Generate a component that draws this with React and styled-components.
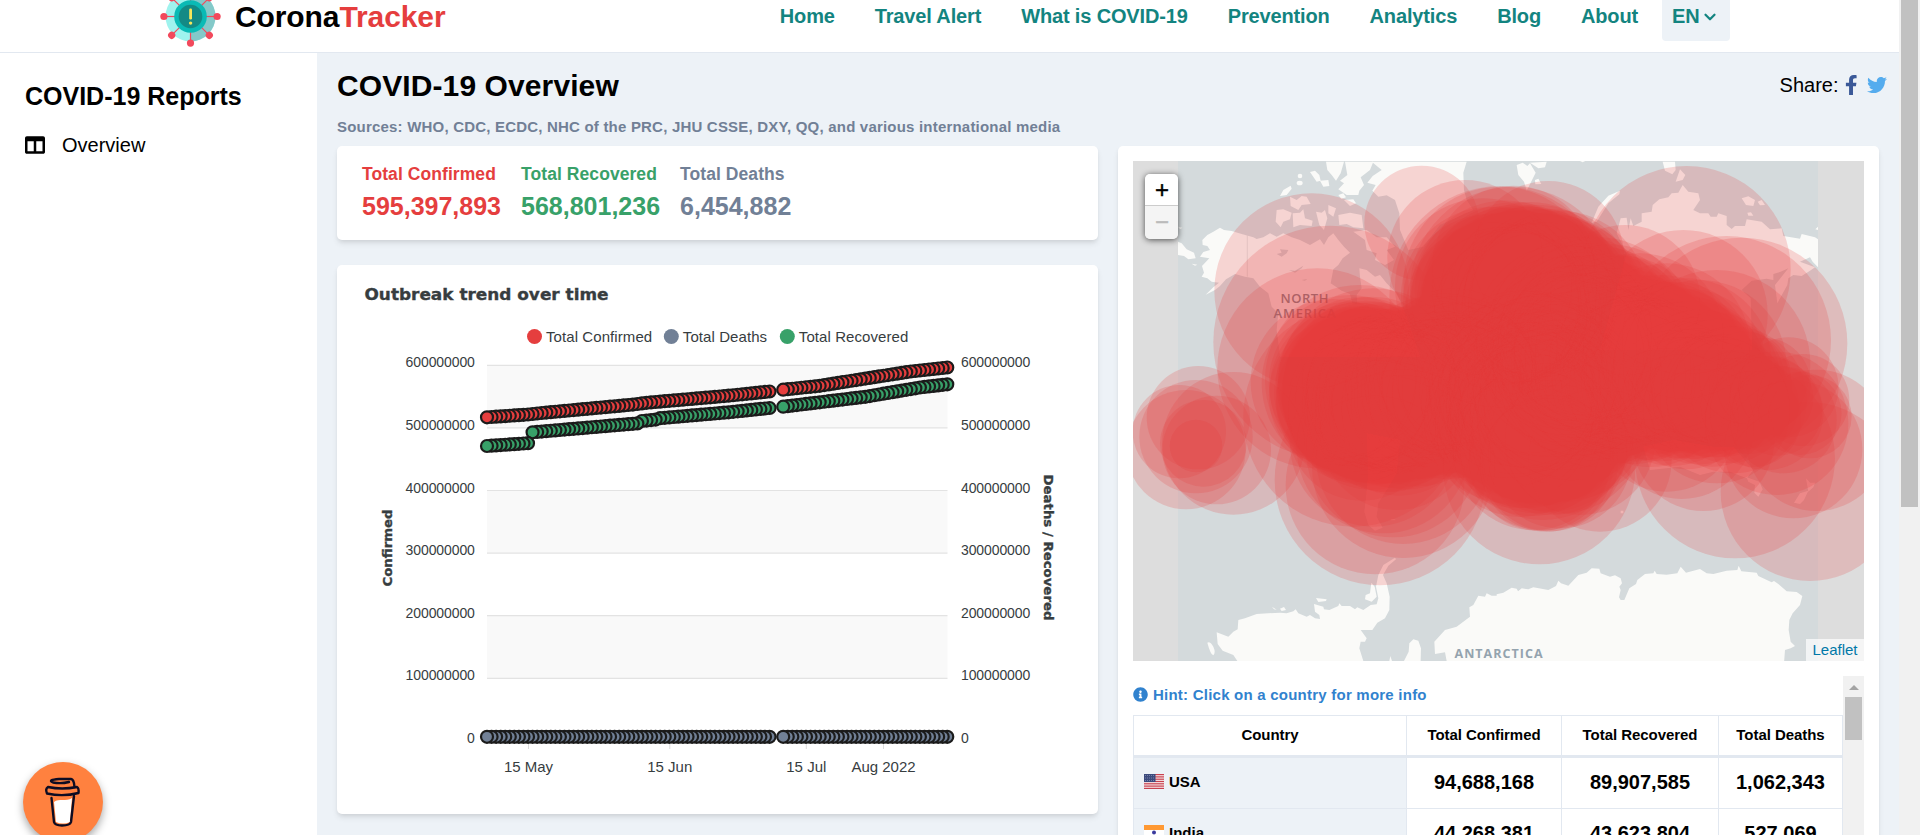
import React from 'react';
import styled, { createGlobalStyle } from 'styled-components';
import { FaColumns, FaFacebookF, FaTwitter, FaInfoCircle } from 'react-icons/fa';
import { FiChevronDown } from 'react-icons/fi';

const RED = '#e53e3e';
const GREEN = '#38a169';
const SLATE = '#718096';
const SANS = '"Liberation Sans", Arial, sans-serif';

const GlobalStyle = createGlobalStyle`
  * { box-sizing: border-box; }
  body { margin: 0; overflow: hidden; background: #fff; color: #000; font-family: ${SANS}; }
`;

const Page = styled.div`
  display: flex;
  width: 1920px;
  height: 835px;
  overflow: hidden;
  position: relative;
`;

const Viewport = styled.div`
  width: 1899px;
  height: 835px;
  display: flex;
  flex-direction: column;
`;

const PageScrollbar = styled.div`
  width: 21px;
  height: 835px;
  background: #f1f1f1;
  padding: 0 2px;
`;

const Thumb = styled.div`
  height: ${(p) => p.$height}px;
  background: #c1c1c1;
`;

/* ---------- header ---------- */

const Header = styled.header`
  flex: none;
  height: 53px;
  padding: 0 169px 19px 160px;
  border-bottom: 1px solid #e2e8f0;
  background: #fff;
  display: flex;
  align-items: center;
  justify-content: space-between;
`;

const Brand = styled.div`
  display: flex;
  align-items: center;
  gap: 14px;
  height: 33px;
  font-size: 30px;
  font-weight: 700;
  line-height: 33px;
  letter-spacing: -0.1px;
  svg { flex: none; }
`;

const BrandAccent = styled.span`
  color: ${RED};
`;

const Nav = styled.nav`
  display: flex;
  align-items: center;
  height: 33px;
  color: #138480;
`;

const NavLink = styled.a`
  padding: 0 20px;
  font-size: 20px;
  font-weight: 700;
  line-height: 32px;
  margin-bottom: 2px;
  letter-spacing: -0.15px;
  white-space: nowrap;
`;

const LangButton = styled.div`
  display: flex;
  align-items: center;
  width: 68px;
  height: 48px;
  margin: 0 0 0 4px;
  padding: 0 0 0 10px;
  border-radius: 4px;
  background: #edf2f7;
  font-size: 20px;
  font-weight: 700;
  span { line-height: 32px; margin: 0 1px 2px 0; }
  svg { margin-top: 1px; }
`;

/* ---------- layout ---------- */

const Body = styled.div`
  flex: 1;
  display: flex;
  min-height: 0;
`;

const Sidebar = styled.aside`
  flex: none;
  width: 317px;
  padding: 28px 25px;
  background: #fff;
`;

const SidebarTitle = styled.h2`
  margin: 0;
  font-size: 25px;
  line-height: 30px;
`;

const SidebarItem = styled.a`
  display: flex;
  align-items: center;
  gap: 17px;
  margin-top: 19px;
  font-size: 20px;
  line-height: 30px;
`;

const Main = styled.main`
  flex: 1;
  background: #edf2f7;
  padding: 15px 20px 0;
  overflow: hidden;
`;

const TitleBar = styled.div`
  display: flex;
  justify-content: space-between;
  align-items: center;
  height: 36px;
  margin-right: -8px;
`;

const Title = styled.h1`
  margin: 0;
  font-size: 30px;
  line-height: 36px;
  letter-spacing: 0.1px;
`;

const Share = styled.div`
  display: flex;
  align-items: center;
  margin-bottom: 2px;
  font-size: 20px;
  line-height: 34px;
  svg { margin-left: 8px; }
  svg:first-of-type { width: 12.5px; margin: 0 2px 0 6px; }
`;

const Sources = styled.p`
  margin: 12px 0 8px;
  font-size: 15px;
  line-height: 22px;
  font-weight: 700;
  letter-spacing: 0.2px;
  color: ${SLATE};
`;

const Columns = styled.div`
  display: grid;
  grid-template-columns: 761px 761px;
  gap: 20px;
`;

const Column = styled.div`
  display: flex;
  flex-direction: column;
  gap: 25px;
`;

const Card = styled.section`
  background: #fff;
  border-radius: 5px;
  box-shadow: 0 4px 6px -1px rgba(0, 0, 0, 0.1), 0 2px 4px -1px rgba(0, 0, 0, 0.06);
`;

const StatsCard = styled(Card)`
  display: flex;
  gap: 20px;
  height: 94px;
  padding: 16px 25px;
`;

const Stat = styled.div`
  color: ${(p) => p.$color};
  font-weight: 700;
`;

const StatLabel = styled.div`
  font-size: 17.5px;
  line-height: 24px;
  letter-spacing: 0.07px;
`;

const StatValue = styled.div`
  margin-top: 2px;
  font-size: 25px;
  line-height: 36px;
`;

const ChartCard = styled(Card)`
  height: 549px;
  svg { display: block; }
`;

const MapCard = styled(Card)`
  height: 720px;
  padding: 15px;
`;

/* ---------- map ---------- */

const MapBox = styled.div`
  position: relative;
  width: 731px;
  height: 500px;
  overflow: hidden;
  background: #ddd;
  svg { display: block; }
`;

const ZoomControl = styled.div`
  position: absolute;
  left: 12px;
  top: 13px;
  width: 33px;
  border-radius: 5px;
  overflow: hidden;
  box-shadow: 0 1px 6px rgba(0, 0, 0, 0.65);
`;

const ZoomButton = styled.div`
  display: flex;
  justify-content: center;
  height: ${(p) => (p.$disabled ? 33 : 32)}px;
  padding-left: 1px;
  border-bottom: ${(p) => (p.$disabled ? 'none' : '1px solid #ccc')};
  background: ${(p) => (p.$disabled ? '#f4f4f4' : '#fff')};
  color: ${(p) => (p.$disabled ? '#bbb' : '#000')};
  font-size: 24px;
  line-height: 31px;
  -webkit-text-stroke: 0.4px currentColor;
`;

const Attribution = styled.div`
  position: absolute;
  right: 0;
  bottom: 0;
  width: 58px;
  height: 22px;
  background: rgba(255, 255, 255, 0.7);
  color: #0078a8;
  font-size: 15px;
  line-height: 22px;
  text-align: center;
`;

/* ---------- table ---------- */

const TableArea = styled.div`
  display: flex;
  margin-top: 15px;
  height: 200px;
  overflow: hidden;
`;

const TableContent = styled.div`
  width: 710px;
`;

const Hint = styled.div`
  display: flex;
  align-items: center;
  gap: 5px;
  height: 39px;
  padding-bottom: 3px;
  color: #3182ce;
  font-size: 15px;
  font-weight: 700;
  letter-spacing: 0.23px;
`;

const Row = styled.div`
  display: grid;
  grid-template-columns: 273px 155px 157px 125px;
  height: ${(p) => (p.$head ? 43 : 51)}px;
  border: 0 solid #e2e8f0;
  border-top-width: ${(p) => (p.$head ? 1 : 0)}px;
  border-bottom-width: ${(p) => (p.$head ? 3 : 1)}px;
`;

const Cell = styled.div`
  display: flex;
  align-items: center;
  justify-content: center;
  padding-bottom: ${(p) => (p.$head ? 2 : 1)}px;
  border-left: 1px solid #e2e8f0;
  font-weight: 700;
  font-size: ${(p) => (p.$head ? 15 : 20)}px;
  letter-spacing: ${(p) => (p.$head ? -0.05 : 0)}px;
  &:last-child { border-right: 1px solid #e2e8f0; }
`;

const CountryCell = styled(Cell)`
  justify-content: flex-start;
  gap: 5px;
  padding: 0 0 3px 10px;
  background: #edf2f7;
  font-size: 15px;
`;

const InnerScrollbar = styled.div`
  width: 21px;
  background: #f1f1f1;
  padding: 0 2px;
`;

const ScrollArrow = styled.div`
  height: 21px;
  display: flex;
  align-items: center;
  justify-content: center;
  &::before {
    content: '';
    border: 5px solid transparent;
    border-top: 0;
    border-bottom: 5px solid #a3a3a3;
    margin-top: 2px;
  }
`;

const CoffeeButton = styled.div`
  position: absolute;
  left: 23px;
  top: 762px;
  width: 80px;
  height: 80px;
  border-radius: 50%;
  background: #ff813f;
  box-shadow: 0 4px 8px rgba(0, 0, 0, 0.35);
`;

/* ---------- drawings ---------- */

function VirusLogo() {
  const spokes = [0, 45, 90, 135, 180, 225, 270, 315];
  return (
    <svg width="61" height="61" viewBox="-30.5 -30.5 61 61">
      <circle r="25" fill="#9ff3ee" />
      <path d="M0,-25 A25,25 0 0 1 0,25 Z" fill="#84c9c9" />
      {spokes.map((a) => (
        <g key={a} transform={`rotate(${a})`}>
          <line x1="14" x2="25" stroke="#f2495c" strokeWidth="1.2" />
          <circle cx="26.6" r="3.6" fill="#f2495c" />
        </g>
      ))}
      <circle r="16.3" fill="#0abab5" />
      <circle r="11.8" fill="#138a85" />
      <rect x="-1.3" y="-8" width="2.8" height="11" rx="1.2" fill="#f6e65a" />
      <circle cx="0.1" cy="6.6" r="1.7" fill="#f6e65a" />
    </svg>
  );
}

function Coffee() {
  return (
    <svg width="80" height="80" viewBox="0 0 80 80">
      <path d="M31,40 C36,36 43,40 49,36 L47,60 Q40,63 33,60 Z" fill="#fff" />
      <g fill="none" stroke="#0d0c23" strokeWidth="2.4" strokeLinecap="round" strokeLinejoin="round">
        <path d="M28.500,36 L31,60 Q32,63.500 39,63.500 Q47,63.500 48,60 L51,34" />
        <path d="M25,25 Q39,28 54,25 Q56,26 55.500,31 Q40,35 24,31.500 Q22,27 25,25 Z" />
        <path d="M46,20 Q38,22 30,20.500 Q24,18 36,17 L48,17 Q51,17.500 51.500,25" />
      </g>
    </svg>
  );
}

const Y_TICKS = [600000000, 500000000, 400000000, 300000000, 200000000, 100000000, 0];
const X_TICKS = [
  ['15 May', 528.5],
  ['15 Jun', 669.8],
  ['15 Jul', 806.3],
  ['Aug 2022', 883.5],
];
const yAt = (i) => 365.3 + i * 62.6;
const DAYS = Array.from({ length: 102 }, (_, i) => i).filter((i) => i !== 63 && i !== 64);
const dayX = (i) => 487 + i * 4.557;

const CONFIRMED = [[0, 417.3], [9, 414.5], [12, 413], [32, 404.6], [35, 402.8], [53, 395.7], [62, 391.5], [65, 389.7], [73, 385.8], [83, 378.6], [93, 371.5], [101, 367.5]];
const RECOVERED = [[0, 446], [9, 443.2], [10, 432.3], [33, 423.4], [34, 421], [37, 419.6], [38, 418.2], [53, 412.3], [62, 408], [65, 406.7], [83, 396.8], [95, 387.5], [101, 384.3]];
const DEATHS = [[0, 736.8], [101, 736.8]];

function interpolate(points, i) {
  const k = Math.max(1, points.findIndex((p) => p[0] >= i));
  const [x0, y0] = points[k - 1];
  const [x1, y1] = points[k];
  return y0 + ((y1 - y0) * (i - x0)) / (x1 - x0);
}

function Series({ points, color }) {
  return (
    <g fill={color} stroke="#1b1b1b" strokeWidth="2.2">
      {[...DAYS].reverse().map((i) => (
        <circle key={i} cx={dayX(i)} cy={interpolate(points, i)} r="6" />
      ))}
    </g>
  );
}

function TrendChart() {
  const wide = {
    fontFamily: '"DejaVu Sans", Verdana, sans-serif',
    fontWeight: 700,
    lengthAdjust: 'spacingAndGlyphs',
    stroke: '#373d3f',
    strokeWidth: 0.35,
  };
  return (
    <svg width="761" height="549" viewBox="337 265 761 549" fontFamily={SANS} fill="#373d3f">
      <text x="364.500" y="300" fontSize="16" textLength="244" {...wide}>Outbreak trend over time</text>
      {[['Total Confirmed', RED, 534.5], ['Total Deaths', SLATE, 671.3], ['Total Recovered', GREEN, 787.3]].map(
        ([label, color, x]) => (
          <g key={label}>
            <circle cx={x} cy="336.500" r="7.500" fill={color} />
            <text x={x + 11.5} y="342" fontSize="15" letterSpacing="0.080">{label}</text>
          </g>
        )
      )}
      {[0, 2, 4].map((i) => (
        <rect key={i} x="487" y={yAt(i)} width="460.500" height="62.600" fill="#f9f9f9" />
      ))}
      {Y_TICKS.map((v, i) => (
        <g key={v}>
          {i < 6 && <line x1="487" x2="947.500" y1={yAt(i)} y2={yAt(i)} stroke="#e3e3e3" strokeWidth="1.2" />}
          <text x="474.800" y={yAt(i) + 2} fontSize="14" letterSpacing="-0.100" textAnchor="end">{v}</text>
          <text x="961" y={yAt(i) + 2} fontSize="14" letterSpacing="-0.100">{v}</text>
        </g>
      ))}
      {X_TICKS.map(([label, x]) => (
        <g key={label}>
          <line x1={x} x2={x} y1="741" y2="749" stroke="#dcdcdc" />
          <text x={x} y="772.300" fontSize="15" textAnchor="middle">{label}</text>
        </g>
      ))}
      <text transform="translate(392 586.500) rotate(-90)" fontSize="13" textLength="77" {...wide}>Confirmed</text>
      <text transform="translate(1044 474.500) rotate(90)" fontSize="13" textLength="146" {...wide}>Deaths / Recovered</text>
      <Series points={CONFIRMED} color={RED} />
      <Series points={DEATHS} color={SLATE} />
      <Series points={RECOVERED} color={GREEN} />
    </svg>
  );
}

/* Case circles as [cx, cy, r], grouped by map quadrant; units are thirds of a pixel. */
const NORTH_WEST = [
  [575, 422, 292], [630, 577, 350], [592, 655, 300], [905, 219, 172], [1035, 323, 233], [1140, 440, 332],
  [1180, 420, 310], [640, 695, 248], [690, 700, 265], [720, 690, 285], [760, 700, 285], [1090, 410, 265],
];
const SOUTH_WEST = [
  [198, 149, 179], [228, 138, 79], [340, 130, 214], [235, 53, 155], [228, 110, 170], [290, 150, 163], [178, 95, 140],
  [250, 130, 130], [780, 240, 316], [765, 255, 268], [850, 200, 274], [850, 170, 262], [820, 150, 262], [760, 130, 250],
  [725, 80, 222], [790, 140, 260], [700, 50, 330], [720, 30, 215], [800, 60, 215], [830, 100, 230],
];
const NORTH_EAST = [
  [560, 360, 312], [725, 580, 317], [680, 571, 313], [550, 493, 253], [375, 450, 225], [650, 641, 281],
  [145, 320, 227], [40, 350, 243], [0, 400, 290], [420, 560, 250], [500, 590, 250], [560, 640, 255], [600, 650, 260],
  [910, 750, 138], [900, 790, 125], [930, 800, 125], [700, 750, 220],
];
const SOUTH_EAST = [
  [118, 205, 288], [120, 180, 213], [150, 190, 204], [180, 170, 215], [100, 150, 240], [130, 140, 250], [140, 195, 200],
  [300, 180, 215], [240, 120, 225], [705, 175, 300], [930, 275, 268], [880, 148, 207], [950, 121, 212],
  [610, 120, 213], [545, 80, 217], [500, 60, 215], [830, 70, 215], [850, 60, 160], [800, 40, 170], [650, 30, 220],
];

/* Overlapping clusters: [cx, cy, spreadX, spreadY, r, count] in pixels. */
const CLUSTERS = [
  [1524, 303, 38, 15, 87, 50],
  [1368, 392, 22, 14, 80, 34],
  [1400, 402, 28, 16, 76, 24],
  [1448, 385, 30, 20, 74, 26],
  [1538, 405, 36, 34, 84, 50],
  [1592, 350, 36, 28, 86, 34],
  [1652, 372, 46, 18, 78, 32],
  [1704, 390, 34, 18, 62, 18],
  [1762, 398, 38, 24, 46, 8],
];

function clusterCircles() {
  const out = [];
  CLUSTERS.forEach(([cx, cy, sx, sy, r, n]) => {
    for (let i = 0; i < n; i += 1) {
      const t = i * 2.39996;
      const d = Math.sqrt((i + 0.5) / n);
      out.push([cx + Math.cos(t) * d * sx, cy + Math.sin(t) * d * sy, r + ((i * 7) % 9) - 4]);
    }
  });
  return out;
}

function Circles({ list }) {
  return list.map(([x, y, r], i) => <circle key={i} cx={x} cy={y} r={r} />);
}

function WorldMap() {
  const q = {
    nw: 'translate(1120 150) scale(0.33333)',
    ne: 'translate(1500 150) scale(0.33333)',
    sw: 'translate(1120 400) scale(0.33333)',
    se: 'translate(1500 400) scale(0.33333)',
  };
  return (
    <svg width="731" height="500" viewBox="1133 161 731 500">
      <rect x="1178" y="161" width="640" height="500" fill="#d4dadc" />
      <g fill="#fafaf8" strokeLinejoin="round">
        <g transform={q.nw}>
          <path d="M174,275 L185,280 200,298 222,308 227,325 205,328 192,318 174,315Z M215,341 L232,344 225,347Z M174,230 L187,233 180,238Z" />
          <path d="M247,270 L262,255 280,245 300,233 312,240 335,243 365,252 400,262 410,267 430,262 450,250 470,260 490,250 515,262 540,270 570,285 600,268 612,285 625,262 640,250 655,270 672,290 690,308 668,325 655,345 640,358 632,400 665,422 690,432 697,460 712,462 710,435 725,415 720,380 718,355 740,360 765,380 780,375 800,400 830,430 860,500 900,620 480,620 470,540 475,490 455,470 445,430 420,410 400,385 375,380 345,372 318,388 300,408 285,420 257,434 280,412 297,398 275,395 262,385 245,380 252,368 246,348 268,325 240,320 250,306 270,300 262,288 248,285Z" />
          <path d="M510,140 L530,150 545,138 560,140 572,162 545,165 535,180 512,168Z M470,180 L490,178 515,188 510,208 490,215 482,232 467,215Z M518,190 L540,188 550,178 555,205 578,212 575,228 540,225 520,232Z M588,185 L605,188 615,180 622,205 612,240 598,225Z M625,165 L648,175 640,200 625,190Z M655,195 L690,188 725,195 730,235 700,232 680,222 658,225Z" />
          <path d="M700,245 L740,240 770,262 800,262 825,290 800,300 822,330 795,345 765,330 770,310 740,300 735,270Z" />
          <path d="M618,35 L672,35 662,70 648,92 635,75 622,60Z M675,35 L760,35 750,60 722,82 732,105 718,122 715,135 680,135 655,118 672,100 660,92 682,75Z M570,66 L585,62 598,75 602,92 590,95Z M600,92 L625,90 628,108 610,110Z M533,78 a7,7 0 1 0 14,0 a7,7 0 1 0 -14,0 M530,99 a9,7 0 1 0 18,0 a9,7 0 1 0 -18,0 M480,138 L490,120 512,107 515,116 500,135Z M672,150 L700,148 708,160 690,168Z M655,135 l15,-5 8,12 -14,5Z" />
          <path d="M755,35 L1040,35 1030,68 1032,120 1040,150 1060,180 960,225 910,290 865,300 840,240 838,190 825,150 800,136 775,140 757,122 767,105 742,98 758,78 785,60Z" />
        </g>
        <g transform={q.ne}>
          <path d="M50,45 L68,38 82,48 90,40 107,68 92,98 80,122 72,95 55,75Z M90,38 L140,35 135,52 115,55Z M105,90 L115,86 124,102 106,103Z M240,33 L256,33 248,37Z" />
          <path d="M360,122 L325,137 295,170 275,218 290,215 325,160 358,133Z M488,35 L525,35 527,60 517,73 495,62Z M540,58 L556,75 548,90 527,95Z" />
          <path d="M380,310 L350,250 362,205 380,203 385,240 392,205 400,228 425,215 425,190 455,185 458,165 478,148 505,142 515,130 535,128 548,105 565,125 595,130 600,150 580,180 600,190 625,190 632,200 650,200 655,190 680,198 680,225 695,237 705,228 735,228 740,208 785,215 810,238 845,235 850,258 900,266 905,252 945,262 954,268 954,352 938,335 930,322 900,335 945,352 930,362 905,378 880,375 865,385 862,405 832,460 825,405 865,355 842,365 820,372 820,390 800,386 755,392 725,420 752,445 757,600 300,600Z" />
          <path d="M725,145 L745,139 765,150 760,168 738,165Z M773,155 L785,150 795,165 780,166Z M742,188 L753,187 760,197 745,197Z M946,238 L954,230 954,240Z" />
        </g>
        <g transform={q.sw}>
          <path d="M352,783 L340,765 308,752 293,732 290,697 325,710 340,695 353,688 355,660 375,655 410,642 480,638 500,640 520,634 527,628 535,640 560,650 570,645 585,655 600,657 598,645 585,635 582,612 610,620 612,628 628,630 655,618 658,610 665,618 690,618 705,628 712,622 730,630 752,615 770,613 775,595 768,560 775,525 790,495 825,473 828,478 805,497 789,525 800,550 809,590 808,630 795,655 772,668 757,690 722,690 740,715 735,725 722,725 718,745 730,783Z" />
          <path d="M754,548 L764,560 770,590 755,605 735,598 737,585 750,580Z M262,728 Q270,723 280,740 Q288,758 280,766 Q272,765 262,728Z M588,594 L620,598 618,603 595,606Z M456,620 L470,629 462,628Z M480,626 L492,621 498,630 485,633Z M852,783 L866,755 868,730 880,718 895,722 903,745 902,783Z M808,783 L811,768 816,783Z" />
          <path d="M740,100 L840,120 830,220 800,270 775,310 770,350 788,383 765,392 745,375 733,335 738,290 745,220Z M812,357 h14 v4 h-14Z" />
          <path d="M980,783 L975,757 945,762 943,725 975,690 1010,680 1050,650 1048,622 1060,615 1075,587 1095,590 1100,580 1115,587 1140,587 1180,567 1192,575 1205,566 1220,790Z" />
        </g>
        <g transform={q.se}>
          <path d="M-10,790 L-10,583 10,578 35,563 50,566 55,575 65,565 85,568 100,562 145,570 168,558 175,542 183,550 205,557 235,525 260,518 275,505 298,506 302,520 330,530 345,526 362,535 366,550 358,560 362,570 357,592 362,600 373,600 388,565 408,552 412,540 435,522 460,520 464,512 470,522 500,524 532,520 542,500 558,518 600,507 620,520 640,522 680,512 712,510 716,497 724,514 770,518 775,528 815,547 822,543 835,552 860,574 890,576 907,588 900,615 878,640 868,660 866,690 872,725 885,738 872,745 855,750 852,790Z" />
          <path d="M430,140 L520,120 640,140 700,140 760,210 740,235 690,215 640,215 600,225 540,200 450,210Z M740,232 L778,245 788,268 775,290 763,278 765,255 745,245Z M918,235 L930,248 945,248 940,262 925,275 Z M925,272 L912,300 900,312 882,308 900,280Z M362,332 h8 v8 h-8Z" />
        </g>
      </g>
      <g transform={q.nw} fill="#d4dadc">
        <path d="M470,312 L485,308 480,298 505,300 500,310 485,320Z M507,360 L525,362 550,347 545,355 525,368Z M545,390 L562,387 555,392Z" />
        <path d="M382,255 V380" stroke="#d9dbdb" strokeWidth="2" />
      </g>
      <g fontFamily='"Open Sans", sans-serif' textAnchor="middle" fontWeight="600">
        <text x="1304.500" y="302.500" fontSize="13" fill="#77868f" textLength="48">NORTH</text>
        <text x="1304.500" y="317.500" fontSize="13" fill="#77868f" textLength="62">AMERICA</text>
        <text x="1498.500" y="658" fontSize="12.500" fontWeight="700" fill="#94a3ae" textLength="88">ANTARCTICA</text>
      </g>
      <g fill={RED} fillOpacity="0.2">
        <Circles list={clusterCircles()} />
        <g transform={q.nw}><Circles list={NORTH_WEST} /></g>
        <g transform={q.sw}><Circles list={SOUTH_WEST} /></g>
        <g transform={q.ne}><Circles list={NORTH_EAST} /></g>
        <g transform={q.se}><Circles list={SOUTH_EAST} /></g>
      </g>
    </svg>
  );
}

function FlagUSA() {
  return (
    <svg width="20" height="15" viewBox="0 0 20 15">
      <rect width="20" height="15" fill="#f7e9ea" />
      {[0, 2.3, 4.6, 6.9, 9.2, 11.5, 13.8].map((y) => (
        <rect key={y} y={y} width="20" height="1.200" fill="#c8414f" />
      ))}
      <rect width="11.500" height="8" fill="#3c4b7d" />
      <path d="M1,1.500H11M1,4H11M1,6.500H11" stroke="#8f9abb" strokeWidth="0.700" strokeDasharray="1 1" />
    </svg>
  );
}

function FlagIndia() {
  return (
    <svg width="20" height="15" viewBox="0 0 20 15">
      <rect width="20" height="15" fill="#fff" />
      <rect width="20" height="5" fill="#ff9933" />
      <rect y="10" width="20" height="5" fill="#128807" />
      <circle cx="10" cy="7.500" r="2" fill="#3a3a9e" />
    </svg>
  );
}

const NAV = ['Home', 'Travel Alert', 'What is COVID-19', 'Prevention', 'Analytics', 'Blog', 'About'];
const STATS = [
  ['Total Confirmed', '595,397,893', RED],
  ['Total Recovered', '568,801,236', GREEN],
  ['Total Deaths', '6,454,882', SLATE],
];
const ROWS = [
  ['USA', FlagUSA, '94,688,168', '89,907,585', '1,062,343'],
  ['India', FlagIndia, '44,268,381', '43,623,804', '527,069'],
];

export default function App() {
  return (
    <Page>
      <GlobalStyle />
      <Viewport>
        <Header>
          <Brand>
            <VirusLogo />
            <div>Corona<BrandAccent>Tracker</BrandAccent></div>
          </Brand>
          <Nav>
            {NAV.map((n) => <NavLink key={n}>{n}</NavLink>)}
            <LangButton><span>EN</span><FiChevronDown size={18} strokeWidth={3} /></LangButton>
          </Nav>
        </Header>
        <Body>
          <Sidebar>
            <SidebarTitle>COVID-19 Reports</SidebarTitle>
            <SidebarItem><FaColumns size={20} />Overview</SidebarItem>
          </Sidebar>
          <Main>
            <TitleBar>
              <Title>COVID-19 Overview</Title>
              <Share>
                Share:
                <FaFacebookF size={20} color="#3b5998" />
                <FaTwitter size={20} color="#55acee" />
              </Share>
            </TitleBar>
            <Sources>
              Sources: WHO, CDC, ECDC, NHC of the PRC, JHU CSSE, DXY, QQ, and various international media
            </Sources>
            <Columns>
              <Column>
                <StatsCard>
                  {STATS.map(([label, value, color]) => (
                    <Stat key={label} $color={color}>
                      <StatLabel>{label}</StatLabel>
                      <StatValue>{value}</StatValue>
                    </Stat>
                  ))}
                </StatsCard>
                <ChartCard><TrendChart /></ChartCard>
              </Column>
              <MapCard>
                <MapBox>
                  <WorldMap />
                  <ZoomControl>
                    <ZoomButton>+</ZoomButton>
                    <ZoomButton $disabled>−</ZoomButton>
                  </ZoomControl>
                  <Attribution>Leaflet</Attribution>
                </MapBox>
                <TableArea>
                  <TableContent>
                    <Hint><FaInfoCircle size={15} />Hint: Click on a country for more info</Hint>
                    <Row $head>
                      {['Country', 'Total Confirmed', 'Total Recovered', 'Total Deaths'].map((h) => (
                        <Cell key={h} $head>{h}</Cell>
                      ))}
                    </Row>
                    {ROWS.map(([name, Flag, ...values]) => (
                      <Row key={name}>
                        <CountryCell><Flag />{name}</CountryCell>
                        {values.map((v) => <Cell key={v}>{v}</Cell>)}
                      </Row>
                    ))}
                  </TableContent>
                  <InnerScrollbar>
                    <ScrollArrow />
                    <Thumb $height={43} />
                  </InnerScrollbar>
                </TableArea>
              </MapCard>
            </Columns>
          </Main>
        </Body>
      </Viewport>
      <PageScrollbar><Thumb $height={507} /></PageScrollbar>
      <CoffeeButton><Coffee /></CoffeeButton>
    </Page>
  );
}
